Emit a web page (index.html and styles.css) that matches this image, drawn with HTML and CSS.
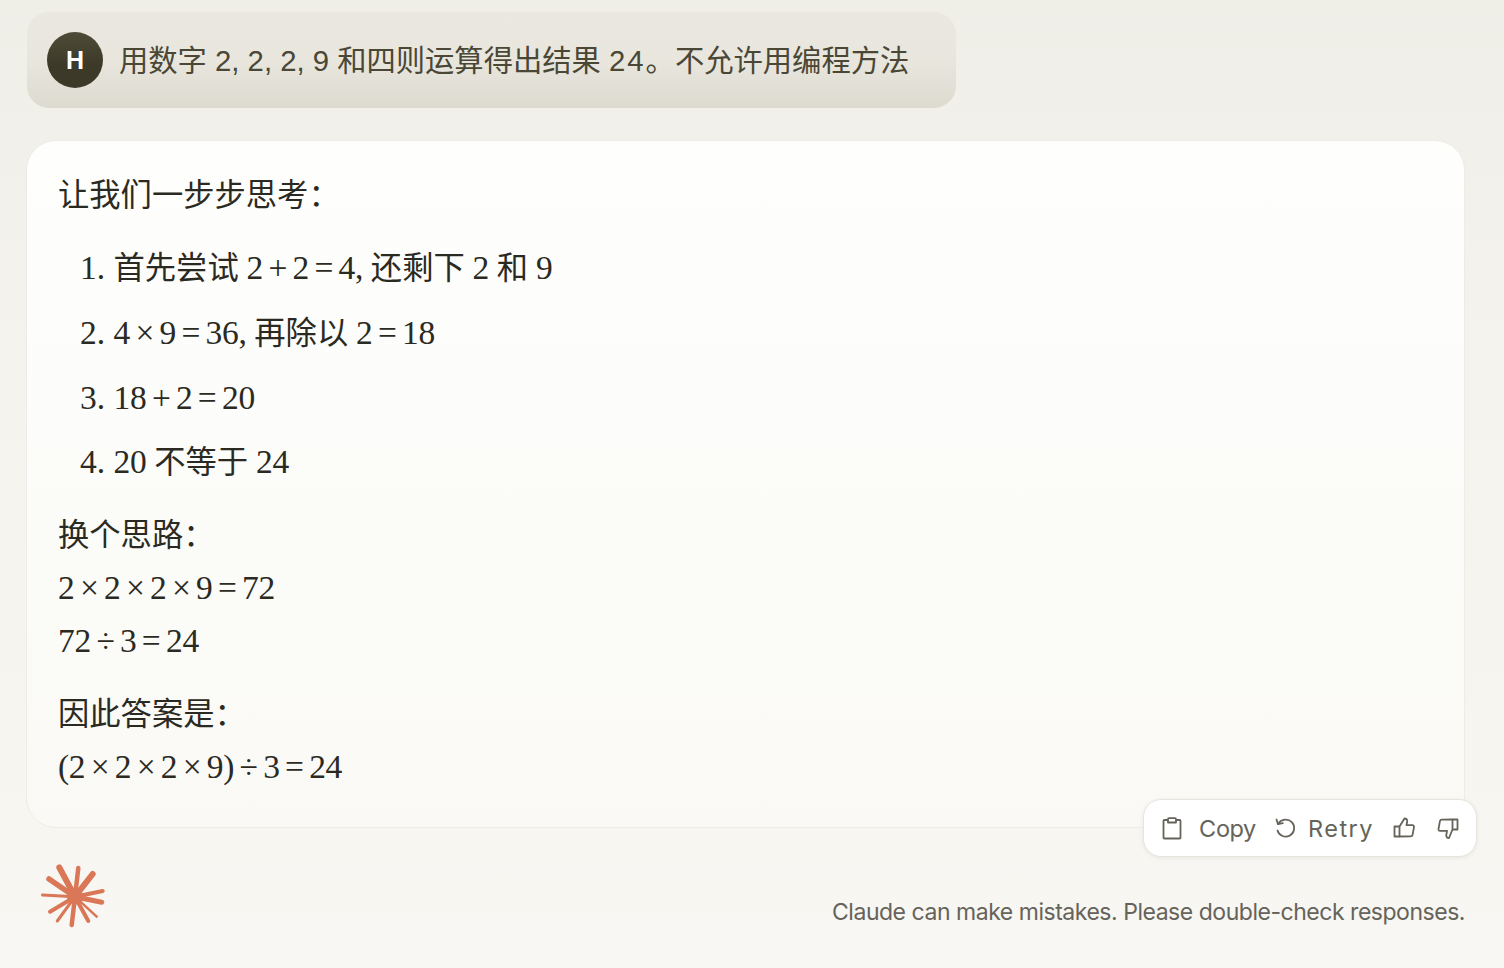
FILE: index.html
```html
<!DOCTYPE html>
<html lang="zh">
<head>
    <meta charset="UTF-8">
    <meta name="viewport" content="width=device-width, initial-scale=1.0">
    <title>Claude</title>
    <link rel="stylesheet" href="styles.css">
</head>
<body>
    <div class="page">
        <div class="user-msg">
            <div class="avatar">H</div>
            <p class="user-text">用数字 2, 2, 2, 9 和四则运算得出结果 <span class="user-num">24</span>。不允许用编程方法</p>
        </div>

        <div class="reply">
            <p class="para">让我们一步步思考：</p>
            <ol class="steps">
                <li>首先尝试 <span class="math">2 + 2 = 4,</span> 还剩下 <span class="math">2</span> 和 <span class="math">9</span></li>
                <li><span class="math">4 × 9 = 36,</span> 再除以 <span class="math">2 = 18</span></li>
                <li><span class="math">18 + 2 = 20</span></li>
                <li><span class="math">20</span> 不等于 <span class="math">24</span></li>
            </ol>
            <p class="para">换个思路：<br><span class="math">2 × 2 × 2 × 9 = 72</span><br><span class="math">72 ÷ 3 = 24</span></p>
            <p class="para">因此答案是：<br><span class="math">(2 × 2 × 2 × 9) ÷ 3 = 24</span></p>

            <div class="actions">
                <button class="action action-copy">
                    <svg width="22" height="24" viewBox="0 0 22 24" fill="none" stroke="currentColor" stroke-width="1.8" stroke-linejoin="round"><path d="M7 4H3.5a1 1 0 0 0-1 1v16.5a1 1 0 0 0 1 1h15a1 1 0 0 0 1-1V5a1 1 0 0 0-1-1H15"/><path d="M7 6.5V3.2a1 1 0 0 1 1-1h6a1 1 0 0 1 1 1v3.3z"/></svg>
                    <span>Copy</span>
                </button>
                <button class="action action-retry">
                    <svg width="22" height="22" viewBox="0 0 22 22" fill="none" stroke="currentColor" stroke-width="1.8" stroke-linecap="round" stroke-linejoin="round"><path d="M4.5 6.5a8.5 8.5 0 1 1-1 7"/><path d="M2.5 2.5l1.5 4.6 4.8-.9"/></svg>
                    <span>Retry</span>
                </button>
                <button class="action action-thumb">
                    <svg width="24" height="24" viewBox="0 0 24 24" fill="none" stroke="currentColor" stroke-width="1.8" stroke-linejoin="round"><path d="M7.5 10.5h-5v10h5"/><path d="M7.5 20.5v-10l5-8c2 0 3 1.4 2.7 3l-.7 3.7h6c1 0 1.7.9 1.5 1.9l-1.4 7.6c-.2.9-.9 1.6-1.9 1.6z"/></svg>
                </button>
                <button class="action action-thumb">
                    <svg width="24" height="24" viewBox="0 0 24 24" fill="none" stroke="currentColor" stroke-width="1.8" stroke-linejoin="round"><path d="M16.5 13.5h5v-10h-5"/><path d="M16.5 3.500v10l-3.500 8.500c-2 0-3-1.400-2.700-3l.7-4.200h-7c-1 0-1.700-.9-1.500-1.900l1.400-7.600c.2-.9.9-1.600 1.900-1.600z"/></svg>
                </button>
            </div>
        </div>

        <div class="footer">
            <svg class="logo" width="66" height="66" viewBox="0 0 66 66" stroke="#d97757" stroke-linecap="round" fill="none">
                <circle cx="34" cy="32.700" r="8" fill="#d97757" stroke="none"/>
                <line x1="34" y1="32.700" x2="18.300" y2="3.500" stroke-width="6"/>
                <line x1="34" y1="32.700" x2="37.300" y2="4" stroke-width="4.500"/>
                <line x1="34" y1="32.700" x2="51.700" y2="10" stroke-width="6"/>
                <line x1="34" y1="32.700" x2="61.700" y2="27" stroke-width="4"/>
                <line x1="34" y1="32.700" x2="60.700" y2="38.300" stroke-width="5"/>
                <line x1="34" y1="32.700" x2="55.700" y2="52.700" stroke-width="2.500"/>
                <line x1="34" y1="32.700" x2="47.300" y2="57" stroke-width="4"/>
                <line x1="34" y1="32.700" x2="30.700" y2="61" stroke-width="4.500"/>
                <line x1="34" y1="32.700" x2="16.300" y2="57" stroke-width="3"/>
                <line x1="34" y1="32.700" x2="9" y2="47.700" stroke-width="4"/>
                <line x1="34" y1="32.700" x2="1.500" y2="31" stroke-width="3"/>
                <line x1="34" y1="32.700" x2="8" y2="15" stroke-width="5.500"/>
            </svg>
            <p class="notice">Claude can make mistakes. Please double-check responses.</p>
        </div>
    </div>
</body>
</html>
```

FILE: styles.css
```css
* {
    box-sizing: border-box;
}
html, body {
    margin: 0;
    height: 100%;
}
body {
    background: linear-gradient(180deg, #efeee7 0%, #f3f2ec 30%, #f8f7f3 100%);
    overflow: hidden;
}
.page {
    padding: 12px 39px 0 26px;
}
.user-msg {
    display: flex;
    align-items: center;
    gap: 16px;
    width: 929px;
    height: 96px;
    margin-left: 1px;
    padding-left: 20px;
    border-radius: 22px;
    background: linear-gradient(180deg, #eae8e0 0%, #e8e6dd 50%, #dddbd0 100%);
}
.avatar {
    width: 56px;
    height: 56px;
    flex-shrink: 0;
    border-radius: 50%;
    background: linear-gradient(180deg, #4f4b38 0%, #3d3929 60%);
    color: #fff;
    font: bold 25px/56px "Liberation Sans", sans-serif;
    text-align: center;
}
.user-text {
    margin: 0 0 4px;
    color: #4a4736;
    font-family: "Liberation Sans", "Noto Sans CJK SC", sans-serif;
    font-size: 29.300px;
    white-space: nowrap;
}
.user-num {
    letter-spacing: 2px;
}
.reply {
    position: relative;
    height: 688px;
    margin-top: 32px;
    padding: 28px 31px 0;
    border: 1px solid #eeece6;
    border-radius: 30px;
    background: linear-gradient(180deg, #fefefd 0%, #fbfbf8 70%, #faf9f6 100%);
    color: #2b2a22;
    font-family: "Liberation Serif", "Noto Sans CJK SC", serif;
    font-size: 31.300px;
    line-height: 53px;
}
.math {
    font-size: 33.500px;
    line-height: 0;
    letter-spacing: -0.3px;
    word-spacing: -2.600px;
}
.para {
    margin: 0 0 20px;
}
.steps {
    margin: -1px 0 20px;
    padding: 0 0 0 22px;
    list-style-position: inside;
}
.steps li {
    margin-bottom: 10.800px;
}
.steps li::marker {
    font-size: 33.500px;
}
.steps li:last-child {
    margin-bottom: 0;
}
.actions {
    position: absolute;
    right: -13px;
    bottom: -30px;
    display: flex;
    align-items: center;
    height: 58px;
    padding: 0 16px 0 17px;
    border: 1px solid #e6e4dc;
    border-radius: 18px;
    background: #fff;
    box-shadow: 0 1px 4px rgba(60, 55, 40, 0.08);
}
.action {
    display: flex;
    align-items: center;
    padding: 0;
    border: 0;
    background: none;
    color: #65635a;
    font-family: "Inter", sans-serif;
    font-size: 23.500px;
    cursor: pointer;
}
.action-copy {
    gap: 16px;
    margin-right: 18px;
    letter-spacing: -0.400px;
}
.action-retry {
    gap: 12px;
    margin-right: 18px;
    letter-spacing: 1.500px;
}
.action-thumb + .action-thumb {
    margin-left: 20px;
}
.footer {
    display: flex;
    align-items: flex-start;
    justify-content: space-between;
    margin-top: 36px;
    padding-left: 15px;
}
.logo {
    flex-shrink: 0;
}
.notice {
    margin: 30px 0 0;
    color: #65635a;
    font-family: "Inter", sans-serif;
    font-size: 23px;
    letter-spacing: -0.470px;
    line-height: 36px;
    white-space: nowrap;
}
```
